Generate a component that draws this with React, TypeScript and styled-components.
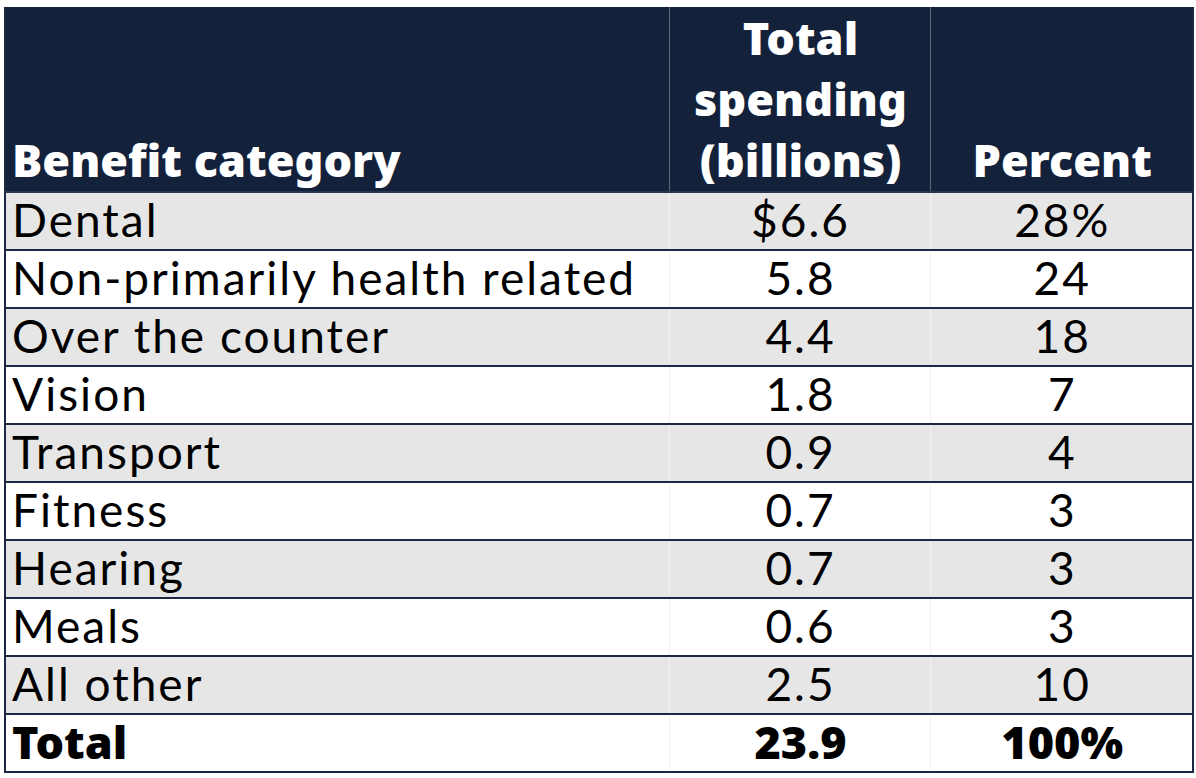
import React from 'react';
import styled, { createGlobalStyle } from 'styled-components';

const GlobalStyle = createGlobalStyle`
	html, body {
		margin: 0;
		padding: 0;
		background: #ffffff;
	}
	body {
		font-family: Lato, "Open Sans", sans-serif;
	}
`;

const rows = [
	{ name: 'Dental', total: '$6.6', percent: '28%' },
	{ name: 'Non-primarily health related', total: '5.8', percent: '24' },
	{ name: 'Over the counter', total: '4.4', percent: '18' },
	{ name: 'Vision', total: '1.8', percent: '7' },
	{ name: 'Transport', total: '0.9', percent: '4' },
	{ name: 'Fitness', total: '0.7', percent: '3' },
	{ name: 'Hearing', total: '0.7', percent: '3' },
	{ name: 'Meals', total: '0.6', percent: '3' },
	{ name: 'All other', total: '2.5', percent: '10' },
];

const App = () => {
	return (
		<>
			<GlobalStyle />
			<Page>
				<Table>
					<colgroup>
						<col style={{ width: 664 }} />
						<col style={{ width: 261 }} />
						<col style={{ width: 263 }} />
					</colgroup>
					<thead>
						<HeadRow>
							<HeadCell $align="left">Benefit category</HeadCell>
							<HeadCell $align="center">
								Total
								<br />
								spending
								<br />
								(billions)
							</HeadCell>
							<HeadCell $align="center" $last>Percent</HeadCell>
						</HeadRow>
					</thead>
					<tbody>
						{rows.map((r, i) => (
							<Row key={r.name} $striped={i % 2 === 0}>
								<Cell $align="left">{r.name}</Cell>
								<Cell $align="center">{r.total}</Cell>
								<Cell $align="center" $last>{r.percent}</Cell>
							</Row>
						))}
						<Row>
							<Cell $align="left" $bold>Total</Cell>
							<Cell $align="center" $bold>23.9</Cell>
							<Cell $align="center" $bold $last>100%</Cell>
						</Row>
					</tbody>
				</Table>
			</Page>
		</>
	);
};

const Page = styled.div`
	padding: 7px 0 0 4px;
	width: 1196px;
	height: 778px;
	box-sizing: border-box;
`;

const Table = styled.table`
	width: 1188px;
	border-collapse: collapse;
	table-layout: fixed;
	border-left: 2px solid #1c2842;
	border-right: 2px solid #1c2842;
	border-bottom: 2px solid #1c2842;
	color: #000;
`;

const HeadRow = styled.tr`
	height: 184px;
	background: #14213a;
`;

const HeadCell = styled.th<{ $align: 'left' | 'center'; $last?: boolean }>`
	vertical-align: bottom;
	text-align: ${(p) => p.$align};
	padding: 0 4px 1px 6px;
	font-family: "Noto Sans", Lato, sans-serif;
	font-weight: 900;
	font-size: 45px;
	line-height: 61px;
	color: #ffffff;
	border-right: ${(p) => (p.$last ? 'none' : '1px solid #5d6679')};
	border-bottom: 2px solid #2a3650;
`;

const Row = styled.tr<{ $striped?: boolean }>`
	height: 57.6px;
	background: ${(p) => (p.$striped ? '#e6e6e6' : '#ffffff')};
	border-bottom: 2px solid #1c2842;
`;

const Cell = styled.td<{ $align: 'left' | 'center'; $last?: boolean; $bold?: boolean }>`
	text-align: ${(p) => p.$align};
	vertical-align: middle;
	padding: 0 4px 2px 6px;
	font-family: ${(p) => (p.$bold ? '"Noto Sans", Lato, sans-serif' : 'Lato, sans-serif')};
	font-weight: ${(p) => (p.$bold ? 900 : 400)};
	font-size: ${(p) => (p.$bold ? '45px' : '46px')};
	letter-spacing: ${(p) => (p.$bold ? '0' : '2px')};
	line-height: 54px;
	white-space: nowrap;
	border-right: ${(p) => (p.$last ? 'none' : '1px solid #f2f2f2')};
`;

export default App;
